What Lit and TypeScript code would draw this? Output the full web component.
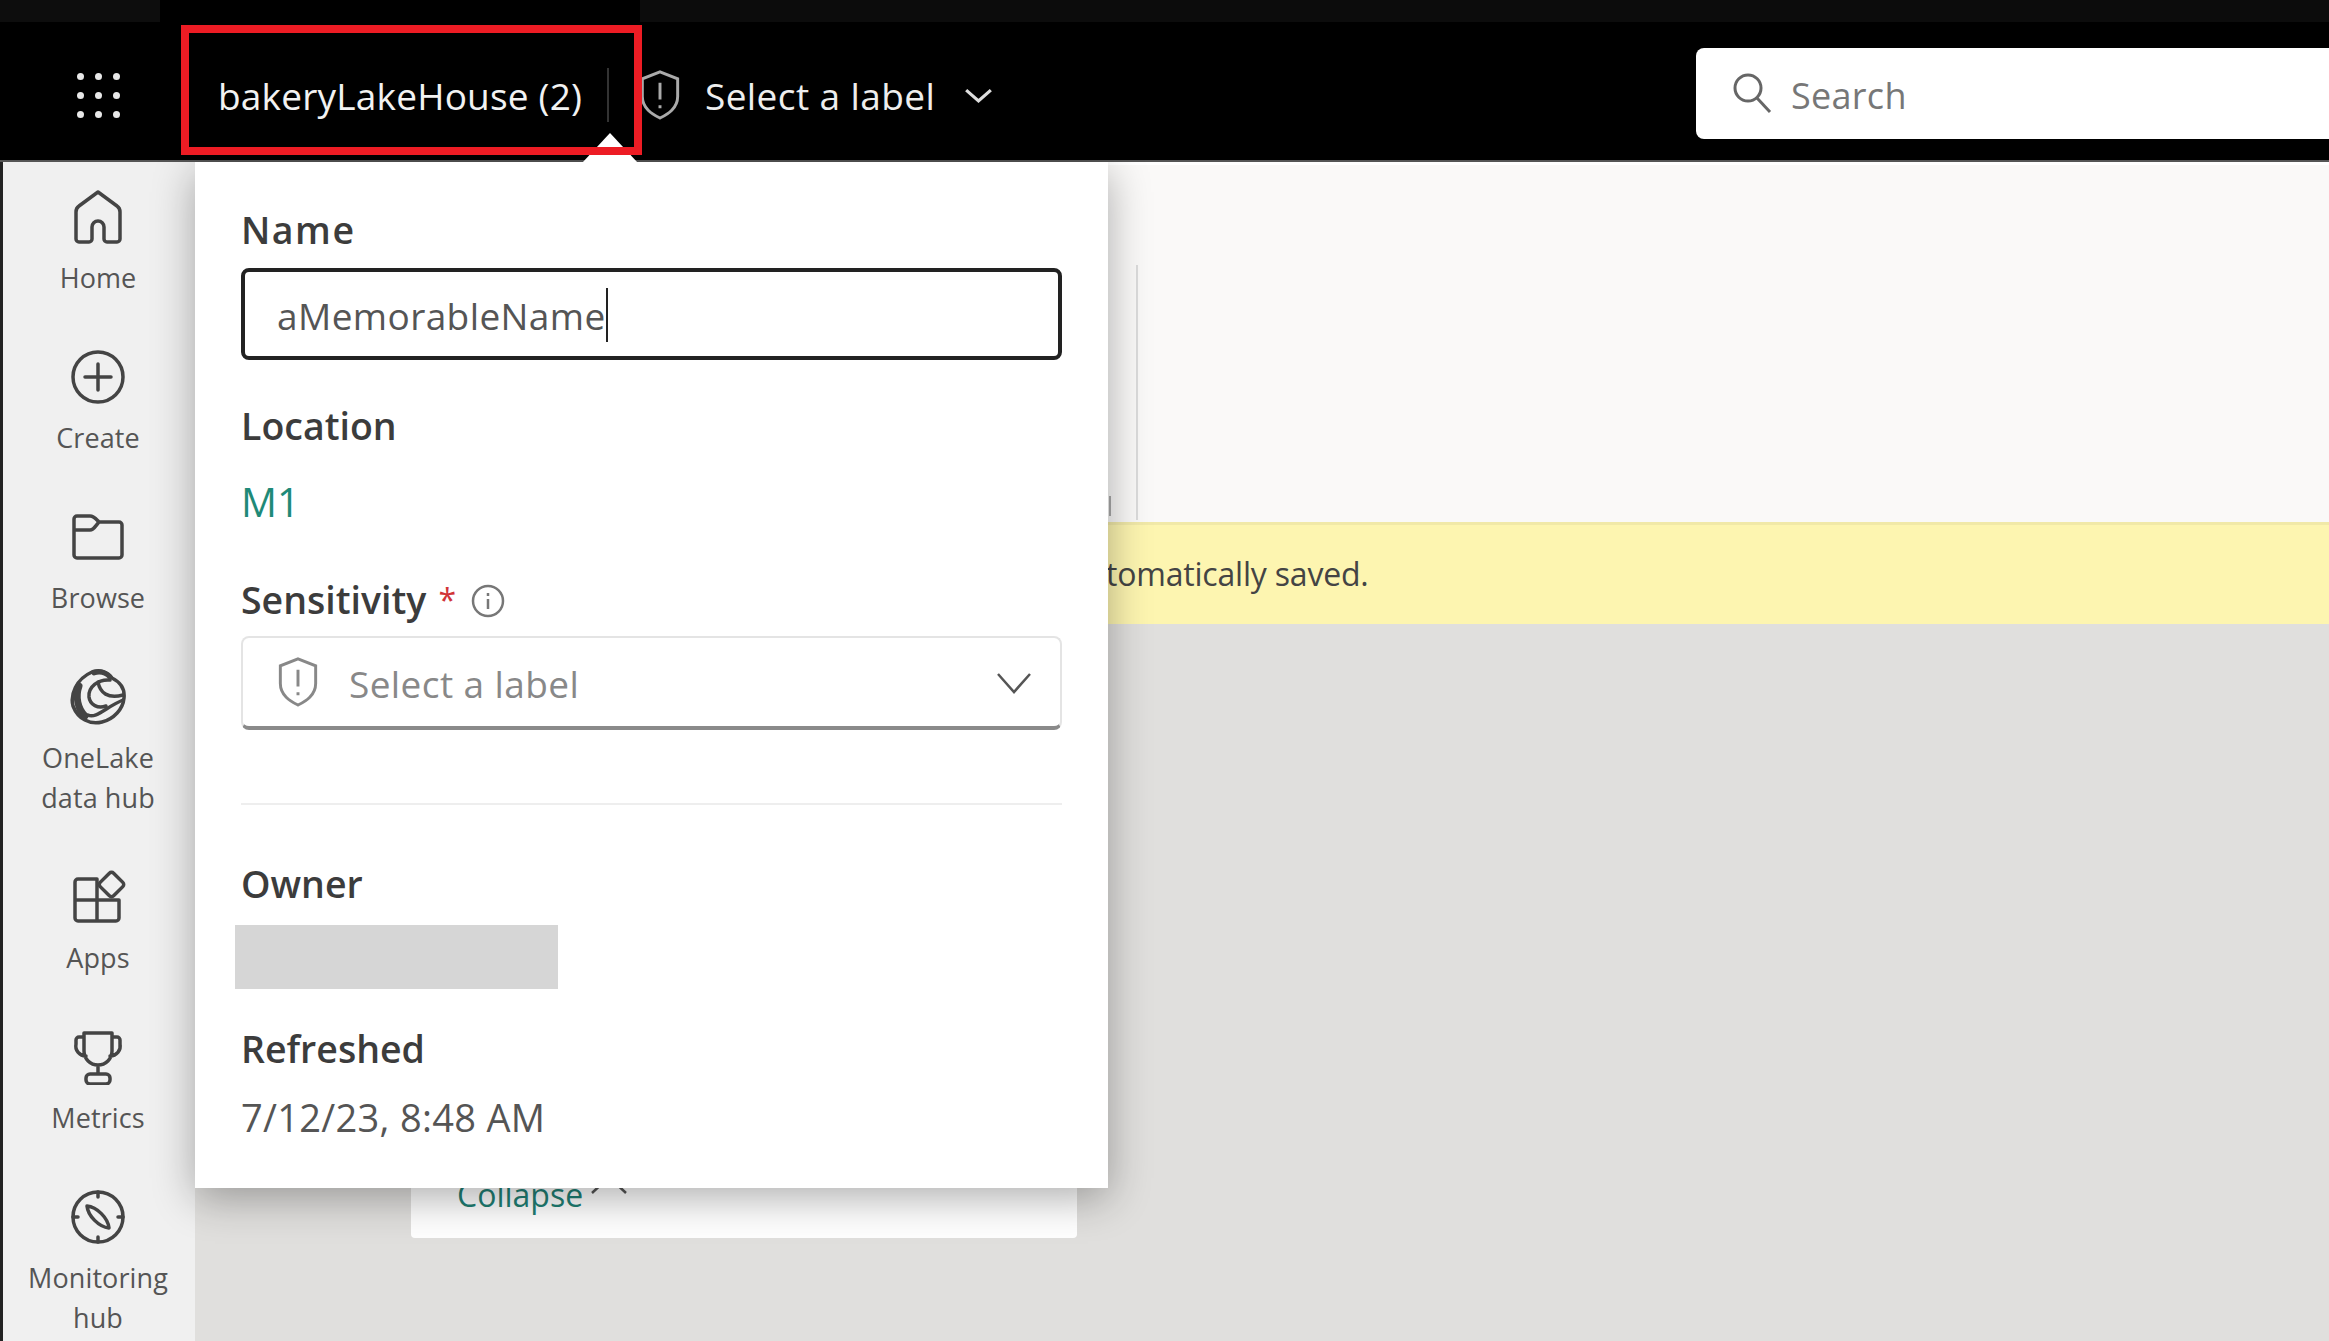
import { LitElement, html, css, svg } from 'lit'
import { customElement } from 'lit/decorators.js'

const navIcons: Record<string, unknown> = {
  home: svg`<path d="M28 3 L47 17 Q50 19 50 23 V50 a3 3 0 0 1 -3 3 H37 a3 3 0 0 1 -3 -3 V38 a6 6 0 0 0 -12 0 V50 a3 3 0 0 1 -3 3 H9 a3 3 0 0 1 -3 -3 V23 Q6 19 9 17 Z"/>`,
  create: svg`<circle cx="28" cy="28" r="25"/><path d="M15 28 H41 M28 15 V41"/>`,
  browse: svg`<path d="M4 10 a3 3 0 0 1 3 -3 H20 c4 0 6 3 9 6 H49 a3 3 0 0 1 3 3 V46 a3 3 0 0 1 -3 3 H7 a3 3 0 0 1 -3 -3 Z M4 21 H20 c4 0 6 -5 9 -8"/>`,
  onelake: svg`<path d="M22 3 C30 0 38 3 42 9 C50 13 55 20 54 29 C53 40 44 50 32 53 C20 56 8 50 3 37 C0 26 6 10 22 3 Z"/><path d="M9 17 C5 28 8 40 15 47" stroke-width="7"/><path d="M24 4 C30 2 36 4 40 8" stroke-width="5"/><path d="M40 11 C28 10 18 18 19 28 C20 36 28 40 36 37 M28 13 C30 24 38 30 53 26"/><path d="M18 46 C26 50 36 38 53 31"/>`,
  apps: svg`<path d="M8 10 H27 V52 H8 a3 3 0 0 1 -3 -3 V13 a3 3 0 0 1 3 -3 Z M5 31 H49 V49 a3 3 0 0 1 -3 3 H27"/><rect x="32" y="6" width="19" height="19" rx="3" transform="rotate(45 41.5 15.5)"/>`,
  metrics: svg`<path d="M14 4 H42 V22 a14 14 0 0 1 -28 0 Z M14 8 H9 a3 3 0 0 0 -3 3 V15 a10 10 0 0 0 10 12 M42 8 H47 a3 3 0 0 1 3 3 V15 a10 10 0 0 1 -10 12 M28 36 V44"/><rect x="16" y="45" width="24" height="10" rx="4"/>`,
  monitoring: svg`<circle cx="28" cy="28" r="25"/><path d="M17 17 C27 18 38 29 39 39 C29 38 18 27 17 17 Z M28 3 V8 M28 48 V53 M3 28 H8 M48 28 H53"/>`,
}

const navItems = [
  { icon: 'home', label: ['Home'] },
  { icon: 'create', label: ['Create'] },
  { icon: 'browse', label: ['Browse'] },
  { icon: 'onelake', label: ['OneLake', 'data hub'] },
  { icon: 'apps', label: ['Apps'] },
  { icon: 'metrics', label: ['Metrics'] },
  { icon: 'monitoring', label: ['Monitoring', 'hub'] },
]

const shield = svg`<path d="M22 3 L40 10 V28 C40 40 30 46 22 50 C14 46 4 40 4 28 V10 Z"/><path d="M22 14 V31 M22 37 V40"/>`

@customElement('app-root')
export class AppRoot extends LitElement {
  static styles = css`
    :host {
      display: block;
      position: relative;
      width: 100%;
      height: 1341px;
      overflow: hidden;
      background: #e0dfdd;
      font-family: 'Open Sans', 'Liberation Sans', sans-serif;
    }

    .strip {
      display: flex;
      height: 22px;
      background: #000;
    }
    .strip-a { width: 160px; background: #0d0d0d; }
    .strip-b { width: 480px; }
    .strip-c { flex: 1; background: #0c0c0c; }

    .header {
      display: flex;
      align-items: center;
      justify-content: space-between;
      height: 140px;
      background: #000;
      border-bottom: 2px solid #555;
      box-sizing: border-box;
    }
    .header-left {
      display: flex;
      align-items: center;
      padding: 8px 0 0 77px;
    }
    .waffle {
      display: grid;
      grid-template-columns: repeat(3, 7px);
      gap: 12px 11px;
    }
    .waffle span {
      width: 7px;
      height: 7px;
      border-radius: 50%;
      background: #e8e8e8;
    }
    .doc-name {
      width: 389px;
      margin-left: 98px;
      color: #f2f2f2;
      font-size: 37px;
      letter-spacing: 0.2px;
      white-space: nowrap;
    }
    .sep {
      width: 2px;
      height: 54px;
      background: #333;
    }
    .head-shield {
      width: 44px;
      height: 52px;
      margin-left: 29px;
      fill: none;
      stroke: #aaa;
      stroke-width: 3;
    }
    .head-label {
      margin-left: 23px;
      color: #eee;
      font-size: 37px;
      letter-spacing: 0.4px;
      white-space: nowrap;
    }
    .head-chevron {
      width: 29px;
      height: 15px;
      margin-left: 29px;
      fill: none;
      stroke: #ddd;
      stroke-width: 3;
    }

    .search {
      display: flex;
      align-items: center;
      box-sizing: border-box;
      width: 633px;
      height: 91px;
      margin-top: 4px;
      padding-left: 36px;
      border-radius: 8px 0 0 8px;
      background: #fff;
      color: #777;
      font-size: 36px;
      letter-spacing: 0.3px;
    }
    .search span {
      padding-top: 4px;
    }
    .search svg {
      width: 40px;
      height: 42px;
      margin-right: 19px;
      fill: none;
      stroke: #666;
      stroke-width: 3;
    }

    .body {
      display: flex;
      height: 1179px;
    }
    .sidebar {
      display: flex;
      flex-direction: column;
      gap: 51px;
      flex: none;
      box-sizing: border-box;
      width: 195px;
      padding: 27px 2px 0 0;
      border-left: 3px solid #222;
      background: #f0f0f0;
    }
    .nav-item {
      display: flex;
      flex-direction: column;
      align-items: center;
      gap: 13px;
      color: #555;
      font-size: 27px;
      line-height: 40px;
      letter-spacing: 0.1px;
      text-align: center;
    }
    .nav-item svg {
      width: 56px;
      height: 56px;
      fill: none;
      stroke: #444;
      stroke-width: 3.5;
      stroke-linejoin: round;
      stroke-linecap: round;
    }

    .main {
      display: flex;
      flex-direction: column;
      flex: 1;
      min-width: 0;
    }
    .ribbon {
      display: flex;
      align-items: flex-end;
      gap: 25px;
      box-sizing: border-box;
      height: 360px;
      padding: 0 0 2px 914px;
      border-top: 3px solid #fff;
      background: #faf9f8;
    }
    .tick { width: 2px; height: 20px; margin-bottom: 4px; background: #aaa; }
    .ribbon-line { width: 2px; height: 255px; background: #dcdcdc; }
    .banner {
      display: flex;
      align-items: center;
      box-sizing: border-box;
      height: 102px;
      padding: 0 0 2px 874px;
      border-top: 3px solid #f1e9a8;
      background: #fdf5b0;
      color: #444;
      font-size: 32px;
      letter-spacing: -0.2px;
      white-space: nowrap;
    }
    .canvas {
      flex: 1;
      padding-left: 216px;
      background: #e0dfdd;
    }
    .card {
      display: flex;
      align-items: flex-end;
      box-sizing: border-box;
      width: 666px;
      height: 614px;
      padding: 0 0 22px 46px;
      border-radius: 0 0 4px 4px;
      background: #fff;
      color: #1f7f74;
      font-size: 32px;
    }
    .card svg {
      width: 36px;
      height: 18px;
      margin: 0 0 22px 8px;
      fill: none;
      stroke: #555;
      stroke-width: 2.5;
    }

    /* details flyout, opened over the page */
    .flyout {
      position: absolute;
      left: 195px;
      top: 162px;
      z-index: 2;
      display: flex;
      flex-direction: column;
      box-sizing: border-box;
      width: 913px;
      height: 1026px;
      padding: 0 46px;
      background: #fff;
      box-shadow: 0 10px 40px rgba(0, 0, 0, 0.32);
      color: #444;
    }
    .caret {
      position: absolute;
      left: 387px;
      top: -29px;
      width: 0;
      height: 0;
      border-left: 28px solid transparent;
      border-right: 28px solid transparent;
      border-bottom: 30px solid #fff;
    }
    .label {
      font-size: 37.5px;
      font-weight: 600;
      line-height: 44px;
      color: #3c3c3c;
    }
    .name-label { margin-top: 46px; letter-spacing: 1.5px; }
    .input {
      display: flex;
      align-items: center;
      box-sizing: border-box;
      height: 92px;
      margin-top: 16px;
      padding: 2px 0 0 32px;
      border: 4px solid #222;
      border-radius: 8px;
      color: #555;
      font-size: 37px;
      letter-spacing: 0.4px;
    }
    .cursor {
      width: 2px;
      height: 54px;
      background: #222;
    }
    .location-label { margin-top: 44px; }
    .location {
      margin-top: 32px;
      color: #1f8a78;
      font-size: 40px;
      line-height: 44px;
    }
    .sens-row {
      display: flex;
      align-items: center;
      margin-top: 54px;
    }
    .required { margin-left: 12px; color: #d13438; font-size: 32px; line-height: 44px; }
    .info {
      width: 36px;
      height: 36px;
      margin: 2px 0 0 14px;
      fill: none;
      stroke: #777;
      stroke-width: 2.5;
    }
    .select {
      display: flex;
      align-items: center;
      box-sizing: border-box;
      height: 94px;
      margin-top: 14px;
      padding: 0 28px 0 31px;
      border: 2px solid #e4e4e4;
      border-bottom: 4px solid #8a8a8a;
      border-radius: 8px;
      color: #888;
      font-size: 37px;
      letter-spacing: 0.4px;
    }
    .select span {
      padding-top: 3px;
    }
    .select .sel-shield {
      width: 48px;
      height: 52px;
      margin-right: 27px;
      fill: none;
      stroke: #888;
      stroke-width: 3;
    }
    .select .sel-chevron {
      width: 36px;
      height: 22px;
      margin: 2px 0 0 auto;
      fill: none;
      stroke: #555;
      stroke-width: 2.5;
    }
    .rule {
      height: 2px;
      margin-top: 73px;
      background: #eee;
    }
    .owner-label { margin-top: 57px; }
    .owner-mask {
      width: 323px;
      height: 64px;
      margin: 19px 0 0 -6px;
      background: #d6d6d6;
    }
    .refreshed-label { margin-top: 38px; }
    .refreshed {
      margin-top: 24px;
      color: #555;
      font-size: 38px;
      line-height: 44px;
      letter-spacing: 0.3px;
    }

    .callout {
      position: absolute;
      left: 181px;
      top: 25px;
      z-index: 3;
      box-sizing: border-box;
      width: 461px;
      height: 130px;
      border: 8px solid #ed1c24;
    }
  `

  render() {
    return html`
      <div class="strip">
        <div class="strip-a"></div>
        <div class="strip-b"></div>
        <div class="strip-c"></div>
      </div>
      <header class="header">
        <div class="header-left">
          <div class="waffle">
            ${Array.from({ length: 9 }, () => html`<span></span>`)}
          </div>
          <div class="doc-name">bakeryLakeHouse (2)</div>
          <div class="sep"></div>
          <svg class="head-shield" viewBox="0 0 44 53">${shield}</svg>
          <div class="head-label">Select a label</div>
          <svg class="head-chevron" viewBox="0 0 27 14"><path d="M2 2 L13.5 12 L25 2" /></svg>
        </div>
        <div class="search">
          <svg viewBox="0 0 40 42"><circle cx="16" cy="16" r="13" /><path d="M25 26 L38 40" /></svg>
          <span>Search</span>
        </div>
      </header>
      <div class="body">
        <nav class="sidebar">
          ${navItems.map(
            (item) => html`
              <div class="nav-item">
                <svg viewBox="0 0 56 56">${navIcons[item.icon]}</svg>
                <div>${item.label.map((line) => html`<div>${line}</div>`)}</div>
              </div>
            `
          )}
        </nav>
        <div class="main">
          <div class="ribbon">
            <div class="tick"></div>
            <div class="ribbon-line"></div>
          </div>
          <div class="banner">automatically saved.</div>
          <div class="canvas">
            <div class="card">
              Collapse
              <svg viewBox="0 0 36 18"><path d="M1 17 L18 1 L35 17" /></svg>
            </div>
          </div>
        </div>
      </div>

      <section class="flyout">
        <div class="caret"></div>
        <div class="label name-label">Name</div>
        <div class="input">aMemorableName<span class="cursor"></span></div>
        <div class="label location-label">Location</div>
        <div class="location">M1</div>
        <div class="sens-row">
          <div class="label">Sensitivity</div>
          <span class="required">*</span>
          <svg class="info" viewBox="0 0 36 36">
            <circle cx="18" cy="18" r="15" />
            <path d="M18 16 V26 M18 10 V13" />
          </svg>
        </div>
        <div class="select">
          <svg class="sel-shield" viewBox="0 0 44 53">${shield}</svg>
          <span>Select a label</span>
          <svg class="sel-chevron" viewBox="0 0 36 22"><path d="M2 2 L18 20 L34 2" /></svg>
        </div>
        <div class="rule"></div>
        <div class="label owner-label">Owner</div>
        <div class="owner-mask"></div>
        <div class="label refreshed-label">Refreshed</div>
        <div class="refreshed">7/12/23, 8:48 AM</div>
      </section>

      <div class="callout"></div>
    `
  }
}

declare global {
  interface HTMLElementTagNameMap {
    'app-root': AppRoot
  }
}
